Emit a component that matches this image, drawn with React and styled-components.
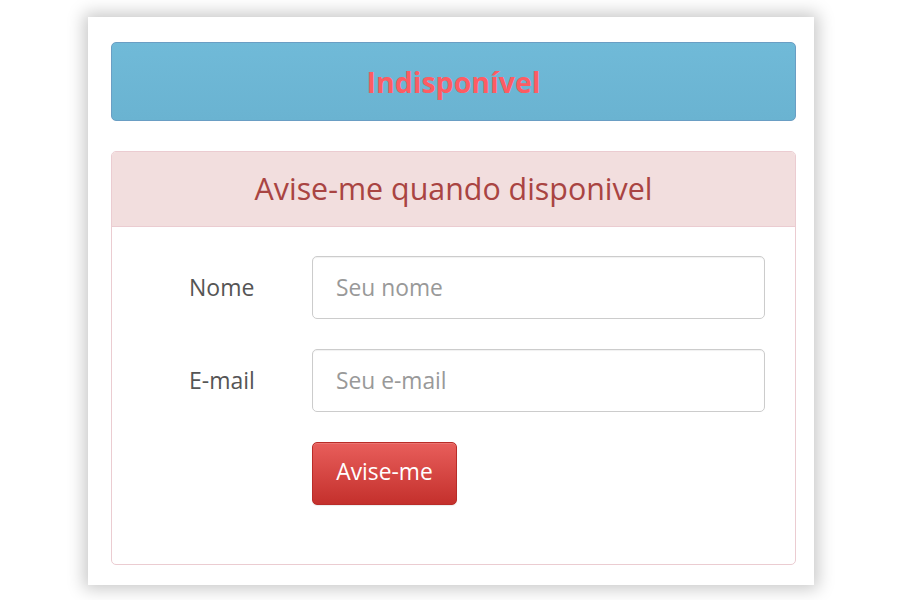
import React from "react";
import styled, { createGlobalStyle } from "styled-components";

const Global = createGlobalStyle`
  html, body { margin: 0; padding: 0; background: #ffffff; }
  body { font-family: "Open Sans", "Noto Sans", sans-serif; }
  * { box-sizing: border-box; }
`;

const Page = styled.div`
  width: 900px;
  height: 600px;
  padding-top: 17px;
  display: flex;
  justify-content: center;
  align-items: flex-start;
  overflow: hidden;
`;

const Card = styled.div`
  width: 726px;
  margin-left: 2px;
  background: #fff;
  padding: 25px 18px 20px 23px;
  box-shadow: 0 0 16px 4px rgba(0, 0, 0, 0.22);
  display: flex;
  flex-direction: column;
  gap: 30px;
`;

const StatusBar = styled.div`
  height: 79px;
  border: 1px solid #6a9ec4;
  border-radius: 5px;
  background: linear-gradient(#70bad8, #6ab3d1);
  display: flex;
  align-items: center;
  justify-content: center;
`;

const StatusText = styled.span`
  font-size: 28.5px;
  font-weight: 700;
  color: #fd5c63;
`;

const Panel = styled.div`
  height: 414px;
  border: 1px solid #ebccd1;
  border-radius: 5px;
  display: flex;
  flex-direction: column;
  overflow: hidden;
`;

const PanelHeading = styled.div`
  height: 75px;
  background: #f2dede;
  border-bottom: 1px solid #ebccd1;
  display: flex;
  align-items: center;
  justify-content: center;
  padding-bottom: 2px;
`;

const PanelTitle = styled.h3`
  margin: 0;
  font-size: 30.4px;
  font-weight: 400;
  color: #a94442;
`;

const Form = styled.form`
  padding: 29px 30px 0 77px;
  display: flex;
  flex-direction: column;
  gap: 30px;
`;

const Row = styled.div`
  display: flex;
  align-items: center;
`;

const Label = styled.label`
  width: 123px;
  font-size: 23px;
  color: #555;
  padding-bottom: 2px;
`;

const Input = styled.input`
  flex: 1;
  height: 63px;
  border: 1px solid #cccccc;
  border-radius: 5px;
  padding: 0 23px;
  font-family: "Open Sans", "Noto Sans", sans-serif;
  font-size: 22.8px;
  color: #555;
  box-shadow: inset 0 1px 1px rgba(0, 0, 0, 0.06);
  &::placeholder { color: #999; }
`;

const Spacer = styled.div`
  width: 123px;
`;

const Button = styled.button`
  width: 145px;
  height: 63px;
  border: 1px solid #b92c28;
  border-radius: 5px;
  background: linear-gradient(#e85e5b, #c4302c);
  color: #fff;
  font-family: "Open Sans", "Noto Sans", sans-serif;
  font-size: 22.8px;
  padding: 0 0 4px;
  box-shadow: inset 0 1px 0 rgba(255, 255, 255, 0.15), 0 1px 1px rgba(0,0,0,0.08);
`;

export default function App() {
  return (
    <>
      <Global />
      <Page>
        <Card>
          <StatusBar>
            <StatusText>Indisponível</StatusText>
          </StatusBar>
          <Panel>
            <PanelHeading>
              <PanelTitle>Avise-me quando disponivel</PanelTitle>
            </PanelHeading>
            <Form onSubmit={(e) => e.preventDefault()}>
              <Row>
                <Label>Nome</Label>
                <Input placeholder="Seu nome" />
              </Row>
              <Row>
                <Label>E-mail</Label>
                <Input placeholder="Seu e-mail" />
              </Row>
              <Row>
                <Spacer />
                <Button type="submit">Avise-me</Button>
              </Row>
            </Form>
          </Panel>
        </Card>
      </Page>
    </>
  );
}
